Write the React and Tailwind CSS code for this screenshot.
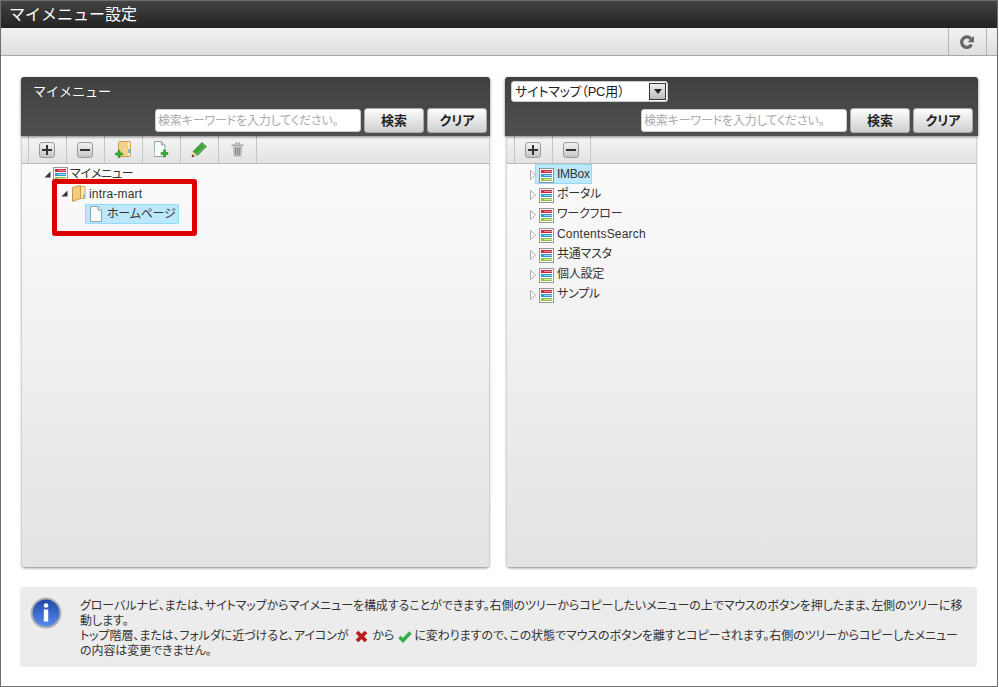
const font = "font-['Liberation_Sans','Noto_Sans_CJK_JP',sans-serif]";

function MenuIcon() {
  return (
    <svg width="15" height="15" viewBox="0 0 15 15" className="shrink-0">
      <rect x="0.5" y="0.5" width="14" height="14" fill="#fff" stroke="#333" strokeDasharray="1 1" />
      <rect x="2" y="2" width="11" height="3" fill="#d8243a" />
      <rect x="2" y="6" width="11" height="3" fill="#2e9bd6" />
      <rect x="2" y="10" width="11" height="3" fill="#8cc63f" />
      <rect x="5" y="3" width="8" height="1" fill="#f08a94" />
      <rect x="5" y="7" width="8" height="1" fill="#9ad2ef" />
      <rect x="5" y="11" width="8" height="1" fill="#d0ea9e" />
    </svg>
  );
}

function TreeFolder() {
  return (
    <svg width="14" height="17" viewBox="0 0 14 17" className="shrink-0">
      <path d="M6 1.500h7v12H6z" fill="#fbe7b0" stroke="#d3aa5c" />
      <path d="M12 9.500v3" stroke="#5fb5e8" strokeWidth="1.500" />
      <path d="M0.500 2.500l8-2v13l-8 3z" fill="#f5cc7c" stroke="#c59a4a" />
    </svg>
  );
}

function AddFolder() {
  return (
    <svg width="17" height="17" viewBox="0 0 17 17" className="shrink-0">
      <rect x="3.500" y="0.500" width="12" height="15" rx="1" fill="#f2d389" stroke="#c89f52" />
      <rect x="13" y="1" width="2" height="14" fill="#fbeec4" />
      <path d="M14 8v4" stroke="#4fa8e0" strokeWidth="1.500" />
      <path d="M3 11h2.500V8.500h2V11H10v2H7.500v2.500h-2V13H3z" transform="translate(-2.500 1)" fill="#2fb52f" stroke="#147a14" strokeWidth="0.500" />
    </svg>
  );
}

function PageIcon() {
  return (
    <svg width="12" height="16" viewBox="0 0 12 16" className="shrink-0">
      <path d="M0.500 0.500h7.500l3.500 3.500v11.500h-11z" fill="#f6fafa" stroke="#8aa3a8" />
      <path d="M8 0.500v3.500h3.500" fill="#dfeaec" stroke="#8aa3a8" />
    </svg>
  );
}

function AddPage() {
  return (
    <svg width="15" height="17" viewBox="0 0 15 17" className="shrink-0">
      <path d="M0.500 0.500h7l3.500 3.500v11.500h-11z" fill="#f6fafa" stroke="#8aa3a8" />
      <path d="M7.500 0.500v3.500H11" fill="#dfeaec" stroke="#8aa3a8" />
      <path d="M7 11.500h2.500V9h2v2.500H14v2h-2.500V16h-2v-2.500H7z" fill="#2fb52f" stroke="#147a14" strokeWidth="0.500" />
    </svg>
  );
}

function PlusMinus({ minus }) {
  return (
    <div className="w-4 h-4 rounded-[3px] border border-[#999] bg-gradient-to-b from-[#f4f4f4] to-[#c4c4c4] flex items-center justify-center">
      <svg width="10" height="10" viewBox="0 0 10 10">
        <path d={minus ? "M0 4h10v2H0z" : "M4 0h2v4h4v2H6v4H4V6H0V4h4z"} fill="#333" />
      </svg>
    </div>
  );
}

function Pencil() {
  return (
    <svg width="16" height="16" viewBox="0 0 16 16">
      <path d="M11 0.500L15.500 4.500 6.500 13.500 2 9.500z" fill="#3fa33a" stroke="#2a7a28" strokeWidth="0.600" />
      <path d="M11.500 2L14 4.500 6 12" fill="none" stroke="#7ccb6c" />
      <path d="M2 9.500L6.500 13.500 0.500 15.500z" fill="#e8c79a" />
      <path d="M0.500 15.500l1-3 2 1.800z" fill="#333" />
    </svg>
  );
}

function Trash() {
  return (
    <svg width="13" height="15" viewBox="0 0 13 15">
      <path d="M0.500 2.500h12v1.500h-12z" fill="#a2a2a8" />
      <path d="M4.500 2.500V1h4v1.500" fill="none" stroke="#a2a2a8" />
      <path d="M2 4.500h9l-0.800 10H2.800z" fill="#b4b4ba" />
      <path d="M4.500 6v7M6.500 6v7M8.500 6v7" stroke="#8a8a90" />
    </svg>
  );
}

function Arrow({ open }) {
  return open ? (
    <svg width="7" height="7" viewBox="0 0 7 7" className="shrink-0">
      <path d="M6.500 0.500v6h-6z" fill="#333" />
    </svg>
  ) : (
    <svg width="6" height="10" viewBox="0 0 6 10" className="shrink-0">
      <path d="M0.500 0.500l5 4.500-5 4.500z" fill="#fff" stroke="#aaa" />
    </svg>
  );
}

function HeaderButton({ label }) {
  return (
    <div className="w-[60px] h-[25px] rounded-[3px] border border-[#aaa] bg-gradient-to-b from-[#fdfdfd] to-[#cfcfcf] flex items-center justify-center text-[13px] font-bold text-[#222] [font-feature-settings:'palt']">
      {label}
    </div>
  );
}

function HeaderSearch() {
  return (
    <div className="flex items-center justify-end gap-[3px]">
      <div className="w-[206px] h-[23px] bg-white rounded-[3px] border border-[#ccc] pl-[2px] flex items-center text-[12px] tracking-[-0.15px] text-[#aaa] whitespace-nowrap [font-feature-settings:'palt']">
        検索キーワードを入力してください。
      </div>
      <HeaderButton label="検索" />
      <HeaderButton label="クリア" />
    </div>
  );
}

function ToolCell({ children }) {
  return <div className="w-[38px] h-full pr-[1px] border-r border-[#c4c4c4] flex items-center justify-center">{children}</div>;
}

function Panel({ width, headerPad, inset, toolPad, header, tools, children }) {
  return (
    <div className={`relative h-[490px] flex flex-col ${width}`}>
      <div className={`h-[59px] pt-[5px] pb-[3px] rounded-t-[3px] bg-gradient-to-b from-[#404040] to-[#4f4f4f] shadow-[0_1px_3px_rgba(0,0,0,0.5)] z-10 flex flex-col justify-between ${headerPad}`}>
        {header}
        <HeaderSearch />
      </div>
      <div className={`flex-1 flex flex-col rounded-b-[3px] shadow-[0_1px_3px_rgba(0,0,0,0.5)] ${inset}`}>
        <div className={`h-[28px] shrink-0 flex items-center bg-gradient-to-b from-[#f6f6f6] to-[#e2e2e2] border-b border-[#bbb] ${toolPad}`}>
          <div className="h-full flex border-l border-[#c4c4c4]">{tools}</div>
        </div>
        <div className="relative flex-1 rounded-b-[3px] bg-gradient-to-b from-[#fbfbfb] to-[#e3e3e3] text-[12px] tracking-[-0.25px] text-[#333] [font-feature-settings:'palt']">
          {children}
        </div>
      </div>
    </div>
  );
}

const siteMap = ["IMBox", "ポータル", "ワークフロー", "ContentsSearch", "共通マスタ", "個人設定", "サンプル"];

export default function App() {
  return (
    <div className={`${font} w-[998px] h-[687px] bg-white border border-[#6e6e6e] flex flex-col`}>
      <div className="h-[27px] shrink-0 pl-[8px] flex items-center bg-gradient-to-b from-[#444] to-[#232323] text-white text-[16px]">
        マイメニュー設定
      </div>
      <div className="h-[28px] shrink-0 flex justify-end pr-[10px] bg-gradient-to-b from-[#f2f2f2] to-[#dedede] border-b border-[#a8a8a8]">
        <div className="w-[39px] pr-[1px] border-x border-[#b4b4b4] flex items-center justify-center">
          <svg width="14" height="14" viewBox="0 0 14 14">
            <path d="M11.500 9.500A5.200 5.200 0 1 1 11 4" fill="none" stroke="#666" strokeWidth="3.200" />
            <path d="M7.500 7.300h6.500V1z" fill="#666" />
          </svg>
        </div>
      </div>

      <div className="flex gap-[15px] pl-[20px] pt-[21px]">
        <Panel
          width="w-[469px]"
          headerPad="pl-[5px] pr-[3px]"
          inset="mx-[1px]"
          toolPad="pl-[6px]"
          header={<div className="pl-[7px] pt-[1px] text-white text-[13px] leading-[18px]">マイメニュー</div>}
          tools={
            <>
              <ToolCell><PlusMinus /></ToolCell>
              <ToolCell><PlusMinus minus /></ToolCell>
              <ToolCell><AddFolder /></ToolCell>
              <ToolCell><AddPage /></ToolCell>
              <ToolCell><Pencil /></ToolCell>
              <ToolCell><Trash /></ToolCell>
            </>
          }
        >
          <div className="flex items-center h-[20px] pl-[22px] gap-[2px]">
            <Arrow open />
            <MenuIcon />
            <span>マイメニュー</span>
          </div>
          <div className="flex items-center h-[19px] pl-[39px] gap-[4px]">
            <Arrow open />
            <TreeFolder />
            <span className="-ml-[1px] tracking-[0.2px]">intra-mart</span>
          </div>
          <div className="ml-[63px] mt-[1px] w-[94px] h-[20px] flex items-center gap-[5px] pl-[4px] bg-[#bde7fb] border border-[#93dbf8]">
            <PageIcon />
            <span className="whitespace-nowrap">ホームページ</span>
          </div>
          <div className="absolute left-[30px] top-[15px] w-[145px] h-[57px] border-[5px] border-[#dc0000] rounded-[3px]" />
        </Panel>

        <Panel
          width="w-[473px]"
          headerPad="pl-[6px] pr-[5px]"
          inset="mx-[2px]"
          toolPad="pl-[7px]"
          header={
            <div className="w-[157px] h-[21px] bg-white rounded-[3px] border border-[#ccc] flex items-center justify-between pl-[3px] pr-[1px] text-[13px] tracking-[-0.2px] text-[#222] -mt-[1px] [font-feature-settings:'palt']">
              <span>サイトマップ（PC用）</span>
              <div className="w-[17px] h-[17px] border border-[#333] bg-gradient-to-b from-[#eee] to-[#bbb] flex items-center justify-center">
                <svg width="8" height="5" viewBox="0 0 8 5"><path d="M0 0h8L4 5z" fill="#222" /></svg>
              </div>
            </div>
          }
          tools={
            <>
              <ToolCell><PlusMinus /></ToolCell>
              <ToolCell><PlusMinus minus /></ToolCell>
            </>
          }
        >
          <div className="pl-[23px] pt-[1px]">
            {siteMap.map((name, i) => (
              <div key={name} className="relative flex items-center h-[20px]">
                {i === 0 && <div className="absolute left-[5px] -top-[1px] w-[57px] h-[20px] bg-[#bde7fb] border border-[#93dbf8]" />}
                <div className="relative flex items-center gap-[3px]">
                  <Arrow />
                  <MenuIcon />
                  <span className={`whitespace-nowrap mb-[2px] ${name === "ContentsSearch" ? "tracking-[0.2px]" : ""}`}>{name}</span>
                </div>
              </div>
            ))}
          </div>
        </Panel>
      </div>

      <div className="ml-[19px] mt-[20px] w-[957px] h-[80px] rounded-[3px] bg-[#ececec] flex text-[12px] tracking-[-0.08px] leading-[15px] text-[#333] [font-feature-settings:'palt']">
        <div className="w-[60px] shrink-0 pl-[10px] pt-[10px]">
          <svg width="32" height="32" viewBox="0 0 32 32">
            <defs>
              <linearGradient id="infoBlue" x1="0" y1="0" x2="0" y2="1">
                <stop offset="0" stopColor="#1d47a8" />
                <stop offset="1" stopColor="#5b8df0" />
              </linearGradient>
            </defs>
            <circle cx="16" cy="16" r="14.500" fill="url(#infoBlue)" stroke="#b2b2b2" strokeWidth="2" />
            <circle cx="16" cy="8.500" r="2.300" fill="#fff" />
            <rect x="13.800" y="12.500" width="4.400" height="12" fill="#fff" />
          </svg>
        </div>
        <div className="pt-[12px] whitespace-nowrap">
          <div>グローバルナビ、または、サイトマップからマイメニューを構成することができます。右側のツリーからコピーしたいメニューの上でマウスのボタンを押したまま、左側のツリーに移</div>
          <div>動します。</div>
          <div className="flex items-center">
            トップ階層、または、フォルダに近づけると、アイコンが
            <svg width="13" height="13" viewBox="0 0 13 13" className="ml-[7px] mr-[4px]">
              <path d="M2 2l9 9M11 2l-9 9" fill="none" stroke="#b81c1c" strokeWidth="3.800" />
            </svg>
            から
            <svg width="14" height="13" viewBox="0 0 14 13" className="mx-[4px] mr-[2px]">
              <path d="M1.500 7l3.500 3.500 7.500-8" fill="none" stroke="#36ad44" strokeWidth="3.400" />
            </svg>
            に変わりますので、この状態でマウスのボタンを離すとコピーされます。右側のツリーからコピーしたメニュー
          </div>
          <div>の内容は変更できません。</div>
        </div>
      </div>
    </div>
  );
}
